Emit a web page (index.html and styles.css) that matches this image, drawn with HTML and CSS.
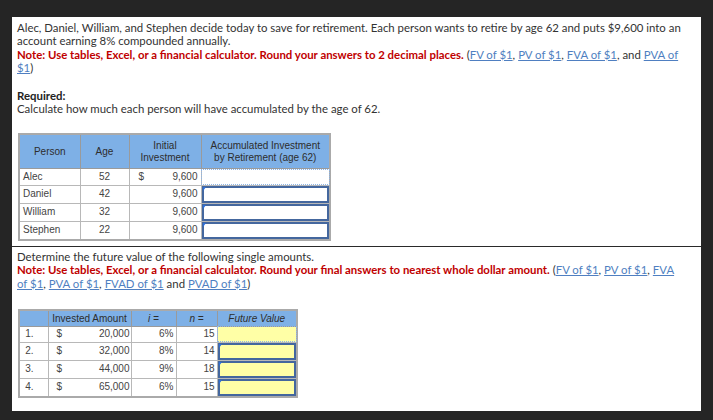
FILE: index.html
```html
<!DOCTYPE html>
<html>
<head>
<meta charset="utf-8">
<link rel="stylesheet" href="styles.css">
</head>
<body>
<div class="panel">
  <section class="sec sec-1">
    <p class="prose">Alec, Daniel, William, and Stephen decide today to save for retirement. Each person wants to retire by age 62 and puts $9,600 into an account earning 8% compounded annually.<br><span class="note">Note: Use tables, Excel, or a financial calculator. Round your answers to 2 decimal places.</span> (<a href="#">FV of $1</a>, <a href="#">PV of $1</a>, <a href="#">FVA of $1</a>, and <a href="#">PVA of $1</a>)</p>
    <p class="prose req"><b>Required:</b><br>Calculate how much each person will have accumulated by the age of 62.</p>
    <table class="grid t1">
      <colgroup><col class="c-p"><col class="c-a"><col class="c-i"><col class="c-r"></colgroup>
      <thead>
        <tr><th>Person</th><th>Age</th><th>Initial<br>Investment</th><th>Accumulated Investment<br>by Retirement (age 62)</th></tr>
      </thead>
      <tbody>
        <tr><td class="name">Alec</td><td class="age">52</td><td class="money"><span>$</span><span>9,600</span></td><td class="inp focus"></td></tr>
        <tr><td class="name">Daniel</td><td class="age">42</td><td class="money"><span></span><span>9,600</span></td><td class="inp"><div class="box"></div></td></tr>
        <tr><td class="name">William</td><td class="age">32</td><td class="money"><span></span><span>9,600</span></td><td class="inp"><div class="box"></div></td></tr>
        <tr><td class="name">Stephen</td><td class="age">22</td><td class="money"><span></span><span>9,600</span></td><td class="inp"><div class="box"></div></td></tr>
      </tbody>
    </table>
  </section>
  <section class="sec sec-2">
    <p class="prose">Determine the future value of the following single amounts.<br><span class="note">Note: Use tables, Excel, or a financial calculator. Round your final answers to nearest whole dollar amount.</span> (<a href="#">FV of $1</a>, <a href="#">PV of $1</a>, <a href="#">FVA of&nbsp;$1</a>, <a href="#">PVA of $1</a>, <a href="#">FVAD of $1</a> and <a href="#">PVAD of $1</a>)</p>
    <table class="grid t2">
      <colgroup><col class="d-n"><col class="d-a"><col class="d-i"><col class="d-y"><col class="d-f"></colgroup>
      <thead>
        <tr><th></th><th>Invested Amount</th><th class="it">i =</th><th class="it">n =</th><th class="it">Future Value</th></tr>
      </thead>
      <tbody>
        <tr><td class="idx">1.</td><td class="money2"><span>$</span><span>20,000</span></td><td class="num">6%</td><td class="num">15</td><td class="inp yel focus"></td></tr>
        <tr><td class="idx">2.</td><td class="money2"><span>$</span><span>32,000</span></td><td class="num">8%</td><td class="num">14</td><td class="inp yel"><div class="box"></div></td></tr>
        <tr><td class="idx">3.</td><td class="money2"><span>$</span><span>44,000</span></td><td class="num">9%</td><td class="num">18</td><td class="inp yel"><div class="box"></div></td></tr>
        <tr><td class="idx">4.</td><td class="money2"><span>$</span><span>65,000</span></td><td class="num">6%</td><td class="num">15</td><td class="inp yel"><div class="box"></div></td></tr>
      </tbody>
    </table>
  </section>
</div>
</body>
</html>
```

FILE: styles.css
```css
html, body {
  margin: 0;
  padding: 0;
  background: #252525;
}
body {
  padding: 17px 12px 14px 12px;
}
.panel {
  width: 689px;
  background: #ffffff;
}
.sec {
  padding: 4px 5px 5px 5px;
}
.sec-2 {
  border-top: 1px solid #2a2a2a;
  padding-top: 3px;
  padding-bottom: 13px;
}
.prose {
  margin: 0;
  font-family: Lato, "Liberation Sans", sans-serif;
  font-size: 11.4px;
  line-height: 13.3px;
  color: #333333;
}
.prose a {
  color: #4f7fc1;
  text-decoration: underline;
}
.note {
  color: #c00000;
  font-weight: bold;
}
.req {
  margin-top: 14.6px;
}
.req b {
  color: #222;
}
.grid {
  border-collapse: collapse;
  table-layout: fixed;
  font-family: "Liberation Sans", Arial, sans-serif;
  font-size: 10px;
  color: #444;
  margin-left: 1px;
  border: 2px solid #aaaaaa;
}
.t1 {
  margin-top: 18px;
  width: 311px;
}
.t2 {
  margin-top: 19px;
  width: 278px;
}
.grid th {
  background: #7eb0e6;
  color: #2d2d2d;
  font-weight: normal;
  border: 1px solid #9a9a9a;
  padding: 0;
  line-height: 11.5px;
}
.t1 th { height: 33px; }
.t2 th { height: 15px; }
.grid th.it { font-style: italic; }
.grid td {
  border: 1px solid #b8b8b8;
  padding: 0 3px;
  height: 15.6px;
  line-height: 12px;
}
.t2 td { height: 15px; }
.c-p { width: 61px; }
.c-a { width: 49px; }
.c-i { width: 72px; }
.c-r { width: 129px; }
.d-n { width: 29px; }
.d-a { width: 83px; }
.d-i { width: 45px; }
.d-y { width: 41px; }
.d-f { width: 80px; }
.name { text-align: left; }
.age { text-align: center; }
.num { text-align: right; }
.idx { text-align: right; padding-right: 14px !important; }
.money span, .money2 span { display: inline-block; }
.money, .money2 {
  white-space: nowrap;
}
.money { padding: 0 2px 0 9px !important; }
.money2 { padding: 0 1px 0 8px !important; }
.money span:first-child, .money2 span:first-child { width: 10px; }
.money span:last-child { width: 49px; text-align: right; }
.money2 span:last-child { width: 63px; text-align: right; }
.t2 .num { padding-right: 2px; }
.inp {
  padding: 0 !important;
  position: relative;
}
.inp.focus {
  outline: 1px dotted #8fb6e6;
  outline-offset: -1px;
}
.yel { background: #ffffa6; }
.box {
  height: 13px;
  border: 2px solid #44679e;
  margin: 0 0 0 0;
  position: relative;
}
.box::before {
  content: "";
  position: absolute;
  left: -1px;
  top: -1px;
  border-top: 4px solid #2f6fd6;
  border-right: 3px solid transparent;
}
```
